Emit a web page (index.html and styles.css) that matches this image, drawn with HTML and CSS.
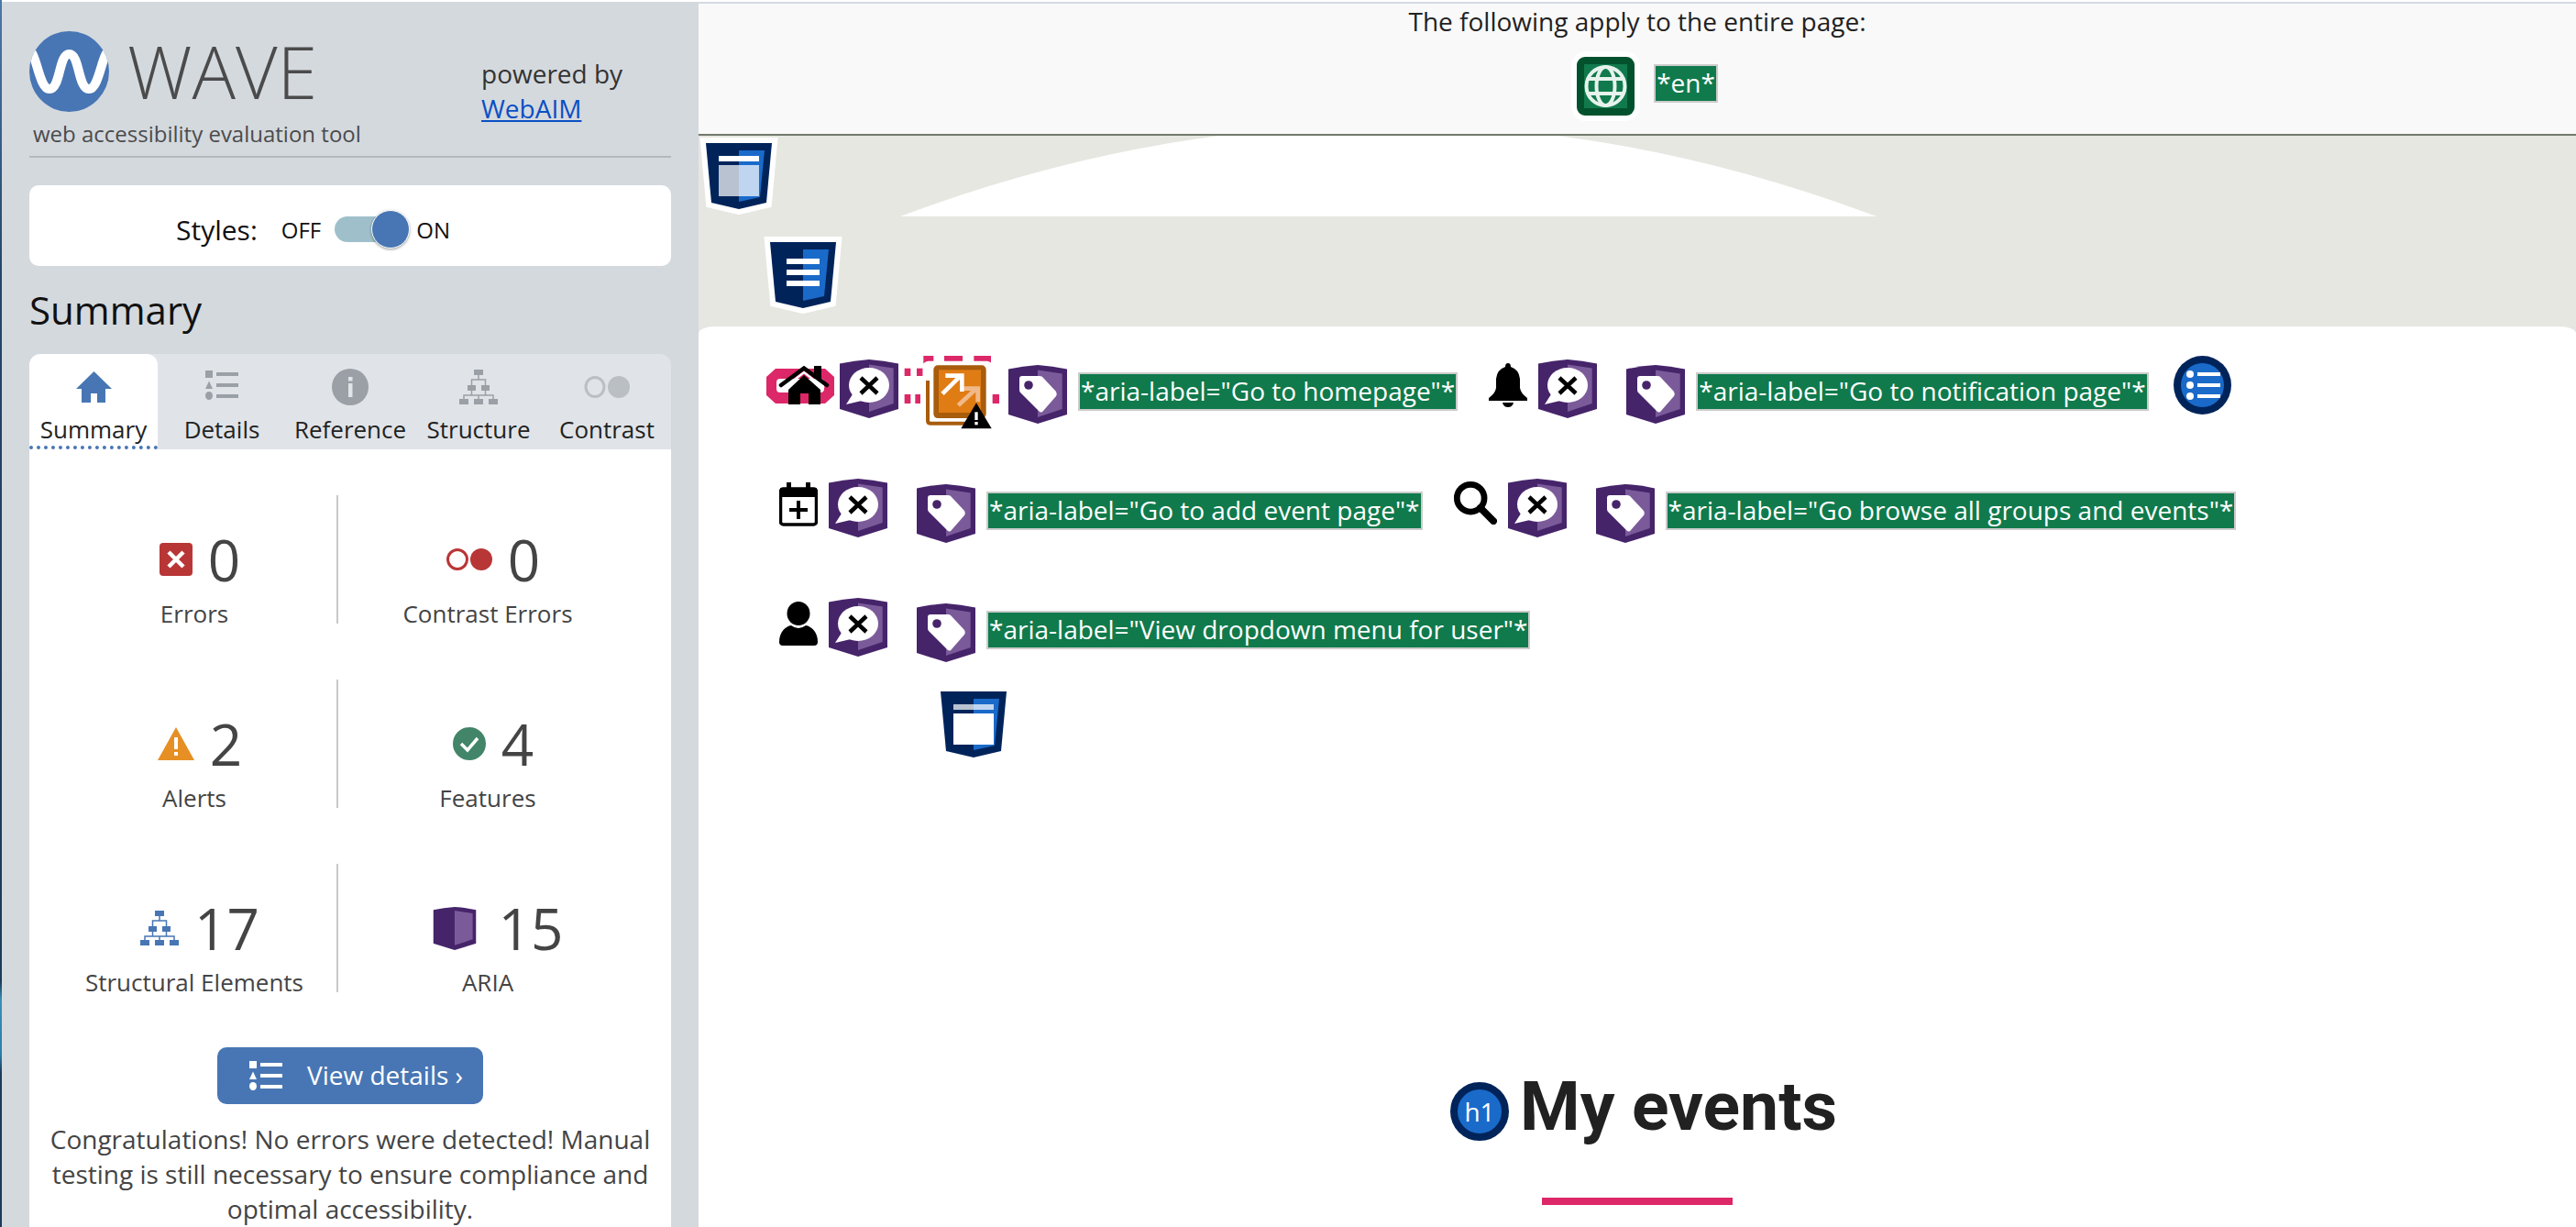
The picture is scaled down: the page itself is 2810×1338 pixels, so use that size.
FILE: index.html
```html
<!DOCTYPE html>
<html lang="en">
  <head>
    <meta charset="UTF-8" />
    <title>WAVE</title>
    <link rel="stylesheet" href="styles.css">
  </head>
  <body>
    <svg class="sprite" width="0" height="0" aria-hidden="true">
      <symbol id="i-list" viewBox="0 0 36 32">
        <rect x="0" y="0" width="8" height="8"/>
        <path d="M4 11.500l4 8.500H0z"/>
        <ellipse cx="4" cy="27.500" rx="4" ry="4.500"/>
        <rect x="12" y="2" width="24" height="4"/>
        <rect x="12" y="14" width="24" height="4"/>
        <rect x="12" y="26" width="24" height="4"/>
      </symbol>
      <symbol id="i-struct" viewBox="0 0 42 38">
        <rect x="16" y="0" width="10" height="6"/>
        <rect x="9" y="17" width="9" height="6"/>
        <rect x="24" y="17" width="9" height="6"/>
        <rect x="0" y="32" width="10" height="6"/>
        <rect x="16" y="32" width="10" height="6"/>
        <rect x="32" y="32" width="10" height="6"/>
        <path d="M21 6v5M13.500 17v-6h15v6M13.500 23v5M28.500 23v5M5 32v-4h32v4M21 28v4" fill="none" stroke="currentColor" stroke-width="1.500"/>
      </symbol>
      <symbol id="i-shield" viewBox="0 0 64 64">
        <path d="M0 4.500Q16 1 32 0Q48 1 64 4.500V54L32 64L0 54z" fill="#46246a"/>
        <path d="M32 5.500L58.700 9.500V48L32 57z" fill="#7b5a9a"/>
      </symbol>
      <symbol id="i-speech" viewBox="0 0 64 64">
        <use href="#i-shield"/>
        <ellipse cx="32" cy="28" rx="22" ry="19" fill="#fff"/>
        <path d="M14 38L7 49L24 45z" fill="#fff"/>
        <path d="M23 20L41 37M41 20L23 37" stroke="#000" stroke-width="4.500" fill="none"/>
      </symbol>
      <symbol id="i-tag" viewBox="0 0 64 64">
        <use href="#i-shield"/>
        <path d="M15 12H34Q37 12 38 14L52 29Q53.500 32 52 34L38 50Q36 53 33 50L13 30Q12 29 12 27V15Q12 12 15 12z" fill="#fff"/>
        <circle cx="22" cy="22" r="4.800" fill="#46246a"/>
      </symbol>
      <symbol id="i-html" viewBox="0 0 72 72">
        <path d="M0 0H72L66 65L36 72L6 65z" fill="#00245a"/>
        <path d="M36 8H64L59 59L36 64z" fill="#1a6ac9"/>
      </symbol>
    </svg>

    <div class="page">
      <aside class="sidebar">
        <header class="brand-head">
          <div class="brand">
            <div class="brand-row">
              <svg class="logo" viewBox="0 0 87 88" aria-hidden="true">
                <ellipse cx="43.500" cy="44" rx="43.500" ry="44" fill="#4876b4"/>
                <clipPath id="logo-clip"><ellipse cx="43.500" cy="44" rx="43.500" ry="44"/></clipPath>
                <path clip-path="url(#logo-clip)" d="M-2 20C8 20 10 63 22 63C34 63 32 25 43.500 25C55 25 53 63 65 63C77 63 79 20 89 20" fill="none" stroke="#fff" stroke-width="10"/>
              </svg>
              <span class="wave-word">WAVE</span>
            </div>
            <div class="tagline">web accessibility evaluation tool</div>
          </div>
          <div class="powered">powered by<br><a href="#">WebAIM</a></div>
        </header>

        <div class="style-card">
          <span class="style-label">Styles:</span>
          <span class="style-state">OFF</span>
          <span class="toggle"><span class="knob"></span></span>
          <span class="style-state">ON</span>
        </div>

        <h2 class="side-title">Summary</h2>

        <nav class="tabs">
          <div class="tab tab-active">
            <span class="tab-icon">
              <svg class="home-ico" viewBox="0 0 39 34" aria-hidden="true"><path d="M19.500 0L39 19H32V34H23V24H16V34H6V19H0z"/></svg>
            </span>
            <span>Summary</span>
          </div>
          <div class="tab">
            <span class="tab-icon"><svg class="list-ico" aria-hidden="true"><use href="#i-list"/></svg></span>
            <span>Details</span>
          </div>
          <div class="tab">
            <span class="tab-icon">
              <svg class="info-ico" viewBox="0 0 40 40" aria-hidden="true"><circle cx="20" cy="20" r="20" fill="#9aa0a6"/><rect x="18" y="16" width="4.500" height="15" fill="#e0e4e8"/><rect x="18" y="9" width="4.500" height="4.500" fill="#e0e4e8"/></svg>
            </span>
            <span>Reference</span>
          </div>
          <div class="tab">
            <span class="tab-icon"><svg class="struct-ico" aria-hidden="true"><use href="#i-struct"/></svg></span>
            <span>Structure</span>
          </div>
          <div class="tab">
            <span class="tab-icon">
              <svg class="contrast-ico" viewBox="0 0 50 24" aria-hidden="true"><ellipse cx="12" cy="12" rx="10" ry="10.500" fill="none" stroke="#babfc4" stroke-width="3"/><ellipse cx="38" cy="12" rx="12" ry="12" fill="#babfc4"/></svg>
            </span>
            <span>Contrast</span>
          </div>
        </nav>

        <section class="summary-body">
          <div class="stats">
            <div class="stat stat-left">
              <div class="stat-top">
                <svg class="st-ico" width="36" height="36" viewBox="0 0 36 36" aria-hidden="true"><rect width="36" height="36" rx="4" fill="#b93636"/><path d="M10 10L26 26M26 10L10 26" stroke="#fff" stroke-width="4.500"/></svg>
                <span class="stat-num">0</span>
              </div>
              <div class="stat-label">Errors</div>
            </div>
            <div class="stat">
              <div class="stat-top">
                <svg class="st-ico" width="50" height="24" viewBox="0 0 50 24" aria-hidden="true"><ellipse cx="12" cy="12" rx="10.500" ry="10.500" fill="none" stroke="#b93636" stroke-width="3"/><ellipse cx="38" cy="12" rx="12" ry="12" fill="#b93636"/></svg>
                <span class="stat-num">0</span>
              </div>
              <div class="stat-label">Contrast Errors</div>
            </div>
            <div class="stat stat-left">
              <div class="stat-top">
                <svg class="st-ico" width="40" height="36" viewBox="0 0 40 36" aria-hidden="true"><path d="M20 0L40 36H0z" fill="#e68f25"/><rect x="18" y="11" width="4" height="13" fill="#fff"/><rect x="18" y="27" width="4" height="4" fill="#fff"/></svg>
                <span class="stat-num">2</span>
              </div>
              <div class="stat-label">Alerts</div>
            </div>
            <div class="stat">
              <div class="stat-top">
                <svg class="st-ico" width="36" height="36" viewBox="0 0 36 36" aria-hidden="true"><circle cx="18" cy="18" r="18" fill="#428568"/><path d="M9 18L16 25L27 12" fill="none" stroke="#fff" stroke-width="3.500"/></svg>
                <span class="stat-num">4</span>
              </div>
              <div class="stat-label">Features</div>
            </div>
            <div class="stat stat-left">
              <div class="stat-top">
                <svg class="st-struct" width="42" height="38" aria-hidden="true"><use href="#i-struct"/></svg>
                <span class="stat-num">17</span>
              </div>
              <div class="stat-label">Structural Elements</div>
            </div>
            <div class="stat">
              <div class="stat-top stat-aria">
                <svg class="st-ico" width="48" height="47" viewBox="0 0 64 64" aria-hidden="true"><use href="#i-shield"/></svg>
                <span class="stat-num">15</span>
              </div>
              <div class="stat-label">ARIA</div>
            </div>
          </div>

          <a class="details-btn" href="#">
            <svg class="btn-ico" aria-hidden="true"><use href="#i-list"/></svg>
            <span>View details ›</span>
          </a>

          <p class="congrats">Congratulations! No errors were detected! Manual testing is still necessary to ensure compliance and optimal accessibility.</p>
        </section>
      </aside>

      <main class="content">
        <div class="doc-bar">
          <div class="doc-note">The following apply to the entire page:</div>
          <div class="doc-items">
            <svg class="globe" viewBox="0 0 75 76" aria-hidden="true">
              <rect width="75" height="76" rx="16" fill="#fff"/>
              <rect x="6" y="6" width="63" height="64" rx="9" fill="#03522d"/>
              <rect x="14" y="14" width="47" height="48" fill="#107a4c"/>
              <g fill="none" stroke="#fff" stroke-width="4" opacity=".9">
                <circle cx="37.500" cy="38" r="21"/>
                <ellipse cx="37.500" cy="38" rx="10" ry="21"/>
                <path d="M18 30H57M18 46H57"/>
              </g>
            </svg>
            <span class="attr-tag">*en*</span>
          </div>
        </div>

        <div class="hero">
          <svg class="hero-arc" viewBox="0 0 2048 208" preserveAspectRatio="none" aria-hidden="true"><path d="M220 88Q752.500 -112 1285 88z" fill="#fff"/></svg>
          <svg class="html-mark mark-one" viewBox="-7 -6 86 84" aria-hidden="true">
            <path d="M0 0H72L66 65L36 72L6 65z" fill="#fff" stroke="#fff" stroke-width="12"/>
            <use href="#i-html" width="72" height="72"/>
            <rect x="14" y="14" width="44" height="6" fill="#fff"/>
            <rect x="14" y="24" width="44" height="34" fill="#fff" opacity=".72"/>
          </svg>
          <svg class="html-mark mark-two" viewBox="-7 -6 86 84" aria-hidden="true">
            <path d="M0 0H72L66 65L36 72L6 65z" fill="#fff" stroke="#fff" stroke-width="12"/>
            <use href="#i-html" width="72" height="72"/>
            <rect x="18" y="18" width="36" height="6" fill="#fff"/>
            <rect x="18" y="30" width="36" height="6" fill="#fff"/>
            <rect x="18" y="42" width="36" height="6" fill="#fff"/>
          </svg>
        </div>

        <div class="panel">
          <div class="nav-row">
            <svg class="link-mark" viewBox="0 0 74 46" aria-hidden="true">
              <path d="M10 3H64L74 12V32L64 41H10L0 32V12z" fill="#dc2768"/>
              <rect x="11" y="14" width="52" height="15" rx="4" fill="#fff"/>
              <path d="M41 10L59 26V42H46V30H37V42H24V26z" fill="#000"/>
              <rect x="52" y="0" width="8" height="14" fill="#000"/>
              <path d="M19 24L41 7L63 24" fill="none" stroke="#fff" stroke-width="2.500"/>
              <path d="M16 21L41 2.500L66 21" fill="none" stroke="#000" stroke-width="4.500" stroke-linecap="round"/>
            </svg>
            <svg class="speech speech-near" aria-hidden="true"><use href="#i-speech"/></svg>
            <svg class="new-window" viewBox="0 0 312 252" aria-hidden="true">
              <g fill="#dc2768">
                <rect x="64" y="3" width="33" height="25"/>
                <rect x="132" y="3" width="60" height="25"/>
                <rect x="229" y="3" width="56" height="25"/>
                <rect x="2" y="44" width="20" height="25"/>
                <rect x="42" y="44" width="20" height="25"/>
                <rect x="2" y="129" width="20" height="30"/>
                <rect x="37" y="129" width="17" height="30"/>
                <rect x="287" y="129" width="27" height="30"/>
              </g>
              <rect x="62" y="20" width="228" height="212" rx="18" fill="#fff"/>
              <path d="M78 84V215Q78 224 88 224H205" fill="none" stroke="#a85c0c" stroke-width="12"/>
              <rect x="97" y="34" width="172" height="173" rx="14" fill="#a85c0c"/>
              <rect x="114" y="49" width="138" height="140" fill="#e07c14"/>
              <path d="M178 165L234 113M196 110H242V154" fill="none" stroke="#f0b98a" stroke-width="14"/>
              <path d="M126 127L184 70M136 68H190V120" fill="none" stroke="#fff" stroke-width="14"/>
              <path d="M187 241L237 157L287 241z" fill="#000"/>
              <rect x="232" y="187" width="10" height="26" fill="#fff"/>
              <rect x="232" y="219" width="10" height="10" fill="#fff"/>
            </svg>
            <svg class="tag-shield tag-near" aria-hidden="true"><use href="#i-tag"/></svg>
            <span class="attr-tag">*aria-label="Go to homepage"*</span>
            <svg class="glyph bell" viewBox="0 0 42 48" aria-hidden="true">
              <path d="M21 0Q24 0 24 4Q33 7 34 17V27Q35 33 42 38V41H0V38Q7 33 8 27V17Q9 7 18 4Q18 0 21 0z"/>
              <path d="M15 43H27Q26 48 21 48Q16 48 15 43z"/>
            </svg>
            <svg class="speech" aria-hidden="true"><use href="#i-speech"/></svg>
            <svg class="tag-shield" aria-hidden="true"><use href="#i-tag"/></svg>
            <span class="attr-tag">*aria-label="Go to notification page"*</span>
            <svg class="list-badge" viewBox="0 0 63 64" aria-hidden="true">
              <ellipse cx="31.500" cy="32" rx="31.500" ry="32" fill="#00245a"/>
              <ellipse cx="31.500" cy="32" rx="23.500" ry="24" fill="#1a6ac9"/>
              <g fill="#fff">
                <circle cx="18" cy="20" r="4"/><circle cx="18" cy="32" r="4"/><circle cx="18" cy="44" r="4"/>
                <rect x="26" y="18" width="25" height="4"/><rect x="26" y="30" width="25" height="4"/><rect x="26" y="42" width="25" height="4"/>
              </g>
            </svg>
          </div>

          <div class="nav-row">
            <svg class="glyph calendar" viewBox="0 0 42 48" aria-hidden="true">
              <rect x="1.500" y="7" width="39" height="39" rx="3" fill="none" stroke="#000" stroke-width="3.500"/>
              <rect x="1" y="6" width="40" height="10"/>
              <rect x="8" y="0" width="5" height="8"/>
              <rect x="29" y="0" width="5" height="8"/>
              <path d="M21 20V40M11 30H31" stroke="#000" stroke-width="4"/>
            </svg>
            <svg class="speech" aria-hidden="true"><use href="#i-speech"/></svg>
            <svg class="tag-shield" aria-hidden="true"><use href="#i-tag"/></svg>
            <span class="attr-tag">*aria-label="Go to add event page"*</span>
            <svg class="glyph search" viewBox="0 0 50 50" aria-hidden="true">
              <circle cx="20" cy="20" r="15.500" fill="none" stroke="#000" stroke-width="7"/>
              <path d="M31 31L46 46" stroke="#000" stroke-width="8" stroke-linecap="round"/>
            </svg>
            <svg class="speech" aria-hidden="true"><use href="#i-speech"/></svg>
            <svg class="tag-shield" aria-hidden="true"><use href="#i-tag"/></svg>
            <span class="attr-tag">*aria-label="Go browse all groups and events"*</span>
          </div>

          <div class="nav-row">
            <svg class="glyph person" viewBox="0 0 42 48" aria-hidden="true">
              <ellipse cx="21" cy="13" rx="12.500" ry="13"/>
              <path d="M0 44C0 33 7 27 13 26Q21 32 29 26C35 27 42 33 42 44Q42 48 38 48H4Q0 48 0 44z"/>
            </svg>
            <svg class="speech" aria-hidden="true"><use href="#i-speech"/></svg>
            <svg class="tag-shield" aria-hidden="true"><use href="#i-tag"/></svg>
            <span class="attr-tag">*aria-label="View dropdown menu for user"*</span>
          </div>

          <svg class="html-plain" viewBox="0 0 72 72" aria-hidden="true">
            <use href="#i-html" width="72" height="72"/>
            <rect x="14" y="14" width="44" height="6" fill="#fff" opacity=".72"/>
            <rect x="14" y="24" width="44" height="34" fill="#fff"/>
          </svg>

          <div class="page-title">
            <span class="h1-badge">h1</span>
            <h1>My events</h1>
          </div>
          <div class="title-rule"></div>
        </div>
      </main>
    </div>
  </body>
</html>
```

FILE: styles.css
```css
* {
  box-sizing: border-box;
}

html,
body {
  margin: 0;
  height: 1338px;
  overflow: hidden;
  background-color: #fff;
}

body {
  font-family: "Open Sans", sans-serif;
  color: #222;
}

.sprite {
  position: absolute;
}

.page {
  display: flex;
  height: 1338px;
  padding-top: 2px;
  padding-left: 2px;
  background: linear-gradient(#4a78a8 0, #24456a 300px, #1c3a58 1070px, #3a8fb5 1090px, #2b7ea8 1150px, #1c3a58 1170px);
  background-size: 2px 100%;
  background-repeat: no-repeat;
}

/* sidebar */
.sidebar {
  width: 760px;
  flex-shrink: 0;
  padding: 0 30px;
  background-color: #d4d9de;
  overflow: hidden;
}

.brand-head {
  display: flex;
  height: 170px;
  padding-top: 32px;
  border-bottom: 2px solid #b4b9bd;
}

.brand {
  width: 493px;
}

.brand-row {
  display: flex;
  align-items: center;
  gap: 20px;
  height: 88px;
}

.logo {
  width: 87px;
  height: 88px;
}

.wave-word {
  font-size: 79px;
  font-weight: 300;
  line-height: 88px;
  color: #4b4b4b;
}

.tagline {
  margin-top: 7px;
  padding-left: 4px;
  font-size: 24px;
  line-height: 34px;
  color: #4b4b4b;
}

.powered {
  padding-top: 27px;
  font-size: 28px;
  line-height: 38px;
  color: #333;
}

.powered a {
  color: #0a4fc4;
}

.style-card {
  display: flex;
  align-items: center;
  height: 88px;
  margin-top: 30px;
  padding-top: 8px;
  padding-left: 160px;
  background-color: #fff;
  border-radius: 10px;
  color: #111;
}

.style-label {
  margin-right: 26px;
  font-size: 30px;
}

.style-state {
  font-size: 24px;
}

.toggle {
  position: relative;
  width: 62px;
  height: 28px;
  margin: 0 27px 0 15px;
  background-color: #9fc0cb;
  border-radius: 14px;
}

.knob {
  position: absolute;
  top: -7px;
  right: -20px;
  width: 42px;
  height: 42px;
  background-color: #4876b4;
  border: 1px solid #fff;
  border-radius: 50%;
  box-shadow: 0 1px 3px rgba(0, 0, 0, 0.4);
}

.side-title {
  margin: 18px 0 18px;
  font-size: 42px;
  font-weight: 400;
  line-height: 60px;
  color: #111;
}

.tabs {
  display: flex;
  height: 104px;
  background-color: #e0e4e8;
  border-radius: 12px 12px 0 0;
}

.tab {
  display: flex;
  flex-direction: column;
  align-items: center;
  width: 140px;
  padding-top: 16px;
  font-size: 26px;
  line-height: 30px;
  color: #222;
}

.tab-active {
  background-color: #fff;
  border-radius: 12px 12px 0 0;
  border-bottom: 4px dotted #4876b4;
}

.tab-icon {
  display: flex;
  align-items: center;
  justify-content: center;
  height: 40px;
  margin-bottom: 11px;
  color: #9aa0a6;
}

.home-ico {
  width: 39px;
  height: 34px;
  fill: #4876b4;
}

.list-ico {
  width: 36px;
  height: 32px;
  margin-bottom: 4px;
  fill: #9aa0a6;
}

.info-ico {
  width: 40px;
  height: 40px;
}

.struct-ico {
  width: 42px;
  height: 38px;
  fill: #9aa0a6;
}

.contrast-ico {
  width: 50px;
  height: 24px;
}

.summary-body {
  height: 848px;
  padding-top: 50px;
  background-color: #fff;
}

.stats {
  display: grid;
  grid-template-columns: 312px 326px;
  grid-auto-rows: 140px;
  row-gap: 61px;
  margin-left: 25px;
}

.stat {
  padding-top: 30px;
  text-align: center;
}

.stat-left {
  border-right: 2px solid #c8c8c8;
}

.stat-top {
  display: flex;
  align-items: center;
  justify-content: center;
  gap: 17px;
  height: 80px;
  padding-left: 12px;
}

.stat-aria {
  gap: 24px;
  padding-left: 22px;
}

.stat-num {
  font-size: 62px;
  font-weight: 400;
  line-height: 80px;
  color: #444;
}

.stat-label {
  margin-top: 4px;
  font-size: 26px;
  line-height: 30px;
  color: #444;
}

.st-struct {
  color: #4876b4;
  fill: #4876b4;
}

.details-btn {
  display: flex;
  align-items: center;
  width: 290px;
  height: 62px;
  margin: 60px auto 0;
  padding-bottom: 2px;
  padding-left: 35px;
  background-color: #4876b4;
  border-radius: 10px;
  font-size: 28px;
  color: #fff;
  text-decoration: none;
}

.btn-ico {
  width: 36px;
  height: 32px;
  margin-top: 2px;
  margin-right: 27px;
  fill: #fff;
  color: #fff;
}

.congrats {
  margin: 19px 0 0;
  padding: 0 12px;
  font-size: 28px;
  line-height: 38px;
  text-align: center;
  color: #444;
}

/* page under test */
.content {
  flex: 1;
  background-color: #e6e7e1;
  border-top: 2px solid #d5dae0;
}

.doc-bar {
  height: 144px;
  background-color: #f9f9f9;
  border-bottom: 2px solid #737a6c;
  text-align: center;
}

.doc-note {
  font-size: 28px;
  line-height: 38px;
  color: #222;
}

.doc-items {
  display: flex;
  align-items: center;
  justify-content: center;
  gap: 15px;
  margin-top: 14px;
  padding-left: 16px;
}

.globe {
  width: 75px;
  height: 76px;
}

.attr-tag {
  flex-shrink: 0;
  height: 42px;
  padding: 0 1px;
  background-color: #107a4c;
  border: 2px solid #ccc;
  font-size: 28px;
  line-height: 37px;
  white-space: nowrap;
  color: #fff;
}

.doc-items .attr-tag {
  margin-bottom: 6px;
}

.hero {
  position: relative;
  height: 208px;
  padding-top: 2px;
  background-color: #e6e7e1;
  overflow: hidden;
}

.hero-arc {
  position: absolute;
  top: 0;
  left: 0;
  width: 2048px;
  height: 208px;
}

.html-mark {
  position: relative;
  display: block;
  width: 86px;
  height: 84px;
}

.mark-one {
  margin-left: 1px;
}

.mark-two {
  margin-top: 24px;
  margin-left: 71px;
}

.panel {
  height: 982px;
  padding-top: 36px;
  background-color: #fff;
  border-radius: 18px 18px 0 0 / 8px 8px 0 0;
}

.nav-row {
  display: flex;
  align-items: flex-start;
  height: 64px;
  margin-bottom: 66px;
  padding-left: 88px;
}

.glyph {
  flex-shrink: 0;
  margin-top: 4px;
  fill: #000;
}

.bell {
  width: 42px;
  height: 48px;
  margin-left: 34px;
}

.calendar,
.person {
  width: 42px;
  height: 48px;
}

.search {
  width: 48px;
  height: 48px;
  margin-top: 2px;
  margin-left: 33px;
}

.speech {
  flex-shrink: 0;
  width: 64px;
  height: 64px;
  margin-left: 12px;
}

.speech-near {
  margin-left: 6px;
}

.tag-shield {
  flex-shrink: 0;
  width: 64px;
  height: 64px;
  margin-top: 6px;
  margin-left: 32px;
}

.tag-near {
  margin-left: 10px;
}

.nav-row .attr-tag {
  margin-top: 14px;
  margin-left: 12px;
}

.link-mark {
  flex-shrink: 0;
  width: 74px;
  height: 46px;
  margin-top: 7px;
  margin-left: -14px;
}

.new-window {
  flex-shrink: 0;
  width: 104px;
  height: 84px;
  margin-top: -5px;
  margin-left: 6px;
}

.list-badge {
  flex-shrink: 0;
  width: 63px;
  height: 64px;
  margin-top: -4px;
  margin-left: 27px;
}

.html-plain {
  display: block;
  width: 72px;
  height: 72px;
  margin-top: -28px;
  margin-left: 264px;
}

.page-title {
  display: flex;
  align-items: flex-start;
  gap: 12px;
  margin-top: 335px;
  margin-left: 820px;
}

.h1-badge {
  display: flex;
  align-items: center;
  justify-content: center;
  width: 64px;
  height: 64px;
  margin-top: 19px;
  background-color: #1a6ac9;
  border: 8px solid #00245a;
  border-radius: 50%;
  font-size: 28px;
  color: #fff;
}

h1 {
  margin: 0;
  font-family: Roboto, sans-serif;
  font-size: 75px;
  font-weight: 700;
  line-height: 90px;
  color: #212121;
}

.title-rule {
  width: 208px;
  height: 8px;
  margin-top: 55px;
  margin-left: 920px;
  background-color: #dc2768;
}
```
